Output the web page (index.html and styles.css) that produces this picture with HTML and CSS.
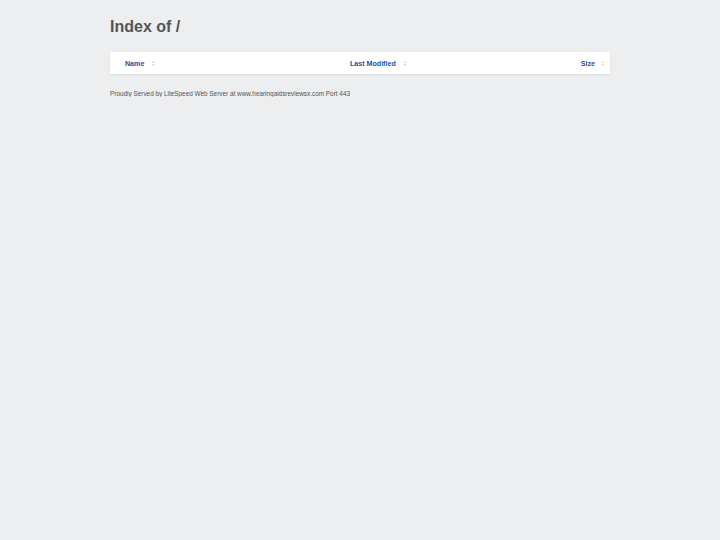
FILE: index.html
```html
<!DOCTYPE html>
<html>
<head>
<meta charset="utf-8">
<link rel="stylesheet" href="styles.css">
</head>
<body>
<div class="wrap">
  <h1 class="title">Index of /</h1>
  <table class="list">
    <thead>
      <tr>
        <th class="c-name"><a href="?C=N;O=D">Name</a><span class="sort up">&#9650;<br>&#9660;</span></th>
        <th class="c-mod"><a href="?C=M;O=A">Last Modified</a><span class="sort">&#9650;<br>&#9660;</span></th>
        <th class="c-size"><a href="?C=S;O=A">Size</a><span class="sort">&#9650;<br>&#9660;</span></th>
      </tr>
    </thead>
  </table>
  <p class="foot">Proudly Served by LiteSpeed Web Server at www.hearingaidsreviewsx.com Port 443</p>
</div>
</body>
</html>
```
FILE: styles.css
```css
html, body { margin: 0; padding: 0; }
body {
  background: #eceef0;
  font-family: "Liberation Sans", Arial, sans-serif;
  color: #555;
}
.wrap { width: 500px; margin: 0 auto; padding-top: 17px; }
.title {
  margin: 0 0 16px 0;
  font-size: 16px;
  line-height: 19px;
  font-weight: bold;
  color: #555;
}
.list {
  width: 100%;
  border-collapse: collapse;
  background: #fff;
  box-shadow: 0 1px 2px rgba(0,0,0,0.08);
}
.list th {
  height: 21px;
  padding: 1px 0 0 0;
  font-size: 7.1px;
  font-weight: bold;
  vertical-align: middle;
}
.list a, .list a:visited { color: #1d4fa3; text-decoration: none; }
.c-name { text-align: left; padding-left: 15px !important; width: 225px; }
.c-mod { text-align: left; }
.c-size { text-align: right; padding-right: 4px !important; }
.sort {
  display: inline-block;
  vertical-align: middle;
  margin-left: 6px;
  font-size: 3px;
  line-height: 3px;
  color: #b8bcc4;
  width: 6px;
  text-align: center;
}
.c-size .sort { margin-left: 5px; }
.foot {
  margin: 16px 0 0 0;
  font-size: 6.4px;
  color: #555;
}
```
